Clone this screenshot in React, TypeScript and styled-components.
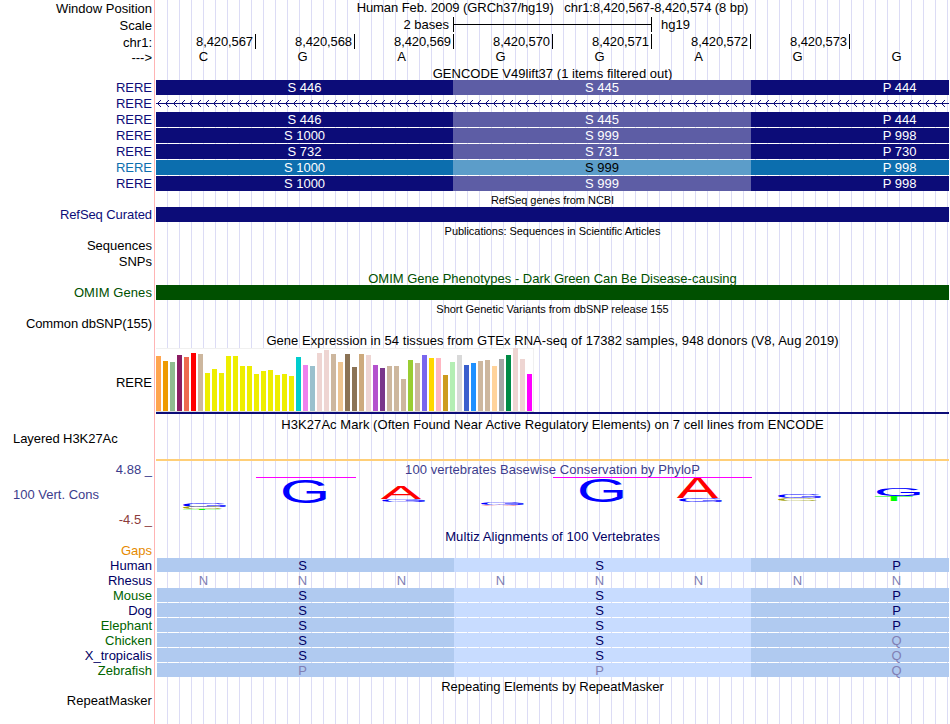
import type { FC, ReactElement, ReactNode } from "react";
import styled, { createGlobalStyle } from "styled-components";

const NAVY = "#0c0c78";
const TEAL = "#0c6eae";
const GREEN = "#005000";
const FADED = "#8080b4";

const GlobalStyle = createGlobalStyle`
  body {
    margin: 0;
    background: #fff;
  }
`;

const Page = styled.main`
  width: 950px;
  height: 724px;
  overflow: hidden;
  display: flex;
  flex-direction: column;
  font-family: "Liberation Sans", Arial, sans-serif;
  font-size: 13px;
  line-height: 15px;
  color: #000;
  white-space: pre;
  background-color: #fff;
  background-image:
    linear-gradient(#ffb4b4, #ffb4b4),
    repeating-linear-gradient(to right, #dcdcf5 0 1px, transparent 1px 12px);
  background-repeat: no-repeat;
  background-size: 1px 100%, 783px 100%;
  background-position: 154px 0, 167px 0;
`;

const Row = styled.div<{ $h: number }>`
  flex: none;
  display: flex;
  gap: 4px;
  height: ${({ $h }) => $h}px;
`;

const Label = styled.div<{ $top?: number; $color?: string; $left?: boolean; $ls?: number }>`
  box-sizing: border-box;
  width: 152px;
  flex: none;
  padding-top: ${({ $top = 0 }) => $top}px;
  padding-left: ${({ $left }) => $left ? 13 : 0}px;
  text-align: ${({ $left }) => $left ? "left" : "right"};
  color: ${({ $color = "#000" }) => $color};
  letter-spacing: ${({ $ls = 0 }) => $ls}px;
`;

// positioned so that a lane paints over the descenders of the title above it
const Lane = styled.div<{ $top?: number }>`
  position: relative;
  box-sizing: border-box;
  width: 793px;
  flex: none;
  overflow-x: clip;
  padding-top: ${({ $top = 0 }) => $top}px;
`;

const Title = styled.div<{ $color?: string; $ls?: number }>`
  text-align: center;
  color: ${({ $color = "#000" }) => $color};
  letter-spacing: ${({ $ls = 0 }) => $ls}px;
`;

const SmallTitle = styled(Title)`
  font-size: 11px;
`;

const ScaleLine = styled.div`
  display: flex;
  align-items: flex-start;
`;

const ScaleText = styled.span<{ $w: number; $pad?: number }>`
  box-sizing: border-box;
  width: ${({ $w }) => $w}px;
  padding-left: ${({ $pad = 0 }) => $pad}px;
  text-align: ${({ $pad }) => $pad ? "left" : "right"};
`;

const ScaleBar = styled.span`
  box-sizing: border-box;
  width: 199px;
  height: 15px;
  border: solid #000;
  border-width: 0 1px;
  margin-left: 4px;
  background: linear-gradient(#000, #000) 0 7px / 100% 1px no-repeat;
`;

const Ticks = styled.div`
  display: flex;
`;

const Tick = styled.span`
  box-sizing: border-box;
  width: 99px;
  height: 15px;
  padding-right: 2px;
  border-right: 1px solid #000;
  text-align: right;
  letter-spacing: -0.1px;

  &:first-child {
    width: 100px;
  }
`;

const Cells = styled.div`
  display: grid;
  grid-template-columns: repeat(8, 99px);
  margin-left: -2px;
  text-align: center;
`;

const Cell = styled.span<{ $color?: string }>`
  color: ${({ $color = "#000" }) => $color};
`;

const Exons = styled.div`
  display: grid;
  grid-template-columns: 297px 298px 297px;
  height: 15px;
`;

const Codon = styled.span<{ $bg: string; $color?: string }>`
  background: ${({ $bg }) => $bg};
  color: ${({ $color = "#fff" }) => $color};
  text-align: center;
`;

const SolidBar = styled.div<{ $color: string }>`
  height: 15px;
  background: ${({ $color }) => $color};
`;

const Aligned = styled.div<{ $filled: boolean }>`
  height: 14px;
  background: ${({ $filled }) => $filled
    ? "linear-gradient(to right, transparent 0.5px, #b0caf0 0.5px 298px, #c8dcff 298px 595px, #b0caf0 595px)"
    : "none"};
`;

const Expression = styled.div`
  height: 64px;
  border-bottom: 2px solid ${NAVY};
`;

const BarBox = styled.div`
  box-sizing: border-box;
  display: flex;
  align-items: flex-end;
  gap: 2px;
  width: 378px;
  height: 64px;
  background: #fff;
  border-bottom: 1px solid #dcdcdc;
  box-shadow: inset 0 1px #f0f0f0, inset -1px 0 #f0f0f0;
`;

const TissueBar = styled.i<{ $h: number; $color: string }>`
  width: 5px;
  height: ${({ $h }) => $h}px;
  background: ${({ $color }) => $color};
`;

const HistoneLine = styled.div`
  height: 2px;
  background: #ffcf78;
`;

const Drawing = styled.svg`
  display: block;
  overflow: visible;
`;

interface Transcript {
    codons?: string[];
    color: string;
    mid?: string;
    midText?: string;
}

const transcripts: Transcript[] = [
    { codons: ["S 446", "S 445", "P 444"], color: NAVY },
    { color: NAVY },
    { codons: ["S 446", "S 445", "P 444"], color: NAVY },
    { codons: ["S 1000", "S 999", "P 998"], color: NAVY },
    { codons: ["S 732", "S 731", "P 730"], color: NAVY },
    { codons: ["S 1000", "S 999", "P 998"], color: TEAL, mid: "#5c9dc9", midText: "#000" },
    { codons: ["S 1000", "S 999", "P 998"], color: NAVY }
];

// [height, color] for each GTEx tissue
const tissues: [number, string][] = [
    [55, "#ffa54f"], [50, "#ee9a00"], [49, "#8fbc8f"], [56, "#8b1c62"], [54, "#ee6a50"], [58, "#ff0000"],
    [57, "#cdb79e"], [38, "#eeee00"], [42, "#eeee00"], [38, "#eeee00"], [55, "#eeee00"], [55, "#eeee00"],
    [45, "#eeee00"], [45, "#eeee00"], [37, "#eeee00"], [40, "#eeee00"], [41, "#eeee00"], [36, "#eeee00"],
    [37, "#eeee00"], [35, "#eeee00"], [54, "#00cdcd"], [46, "#ee82ee"], [45, "#9ac0cd"], [58, "#eed5d2"],
    [61, "#eed5d2"], [57, "#cdb79e"], [49, "#eec591"], [57, "#8b7355"], [44, "#8b7355"], [57, "#cdaa7d"],
    [56, "#eed5d2"], [46, "#b452cd"], [43, "#7a378b"], [45, "#cdb79e"], [45, "#cdb79e"], [32, "#cdb79e"],
    [51, "#9acd32"], [48, "#cdb79e"], [56, "#7a67ee"], [53, "#ffd700"], [53, "#ffb6c1"], [36, "#cd9b1d"],
    [49, "#b4eeb4"], [56, "#d9d9d9"], [46, "#3a5fcd"], [48, "#1e90ff"], [50, "#cdb79e"], [51, "#cdb79e"],
    [45, "#ffd39b"], [52, "#a6a6a6"], [56, "#008b45"], [63, "#eed5d2"], [52, "#eed5d2"], [37, "#ff00ff"]
];

interface Species {
    name: string;
    color: string;
    bases: string;
    filled?: boolean;
}

const DARK = "#000064";
const LEAF = "#006400";

const species: Species[] = [
    { name: "Human", color: DARK, bases: " S  S  P" },
    { name: "Rhesus", color: DARK, bases: "NNNNNNNN", filled: false },
    { name: "Mouse", color: LEAF, bases: " S  S  P" },
    { name: "Dog", color: DARK, bases: " S  S  P" },
    { name: "Elephant", color: LEAF, bases: " S  S  P" },
    { name: "Chicken", color: LEAF, bases: " S  S  Q" },
    { name: "X_tropicalis", color: DARK, bases: " S  S  Q" },
    { name: "Zebrafish", color: LEAF, bases: " P  P  Q" }
];

// ink box of each capital, in em, baseline at 0
const ink: Record<string, { x: number; w: number; top: number; h: number }> = {
    A: { x: 0.004, w: 0.66, top: 0.688, h: 0.688 },
    C: { x: 0.05, w: 0.635, top: 0.698, h: 0.708 },
    G: { x: 0.05, w: 0.66, top: 0.698, h: 0.708 },
    T: { x: 0.022, w: 0.568, top: 0.688, h: 0.688 }
};

interface LogoLetter {
    char: string;
    x: number;
    y: number;
    w: number;
    h: number;
    color: string;
}

const BLUE = "#0000ff";

const logo: LogoLetter[] = [
    { char: "G", x: 27, y: 26, w: 43, h: 4, color: BLUE },
    { char: "C", x: 27, y: 30, w: 39, h: 2, color: "#a0a000" },
    { char: "T", x: 27, y: 32, w: 38, h: 1, color: "#00ff00" },
    { char: "G", x: 127, y: 2, w: 43, h: 24, color: BLUE },
    { char: "A", x: 225, y: 9, w: 40, h: 13, color: "#ff0000" },
    { char: "G", x: 226, y: 22, w: 43, h: 3, color: BLUE },
    { char: "G", x: 325, y: 26, w: 43, h: 2, color: BLUE },
    { char: "A", x: 325, y: 28, w: 38, h: 1, color: "#ff0000" },
    { char: "G", x: 424, y: 2, w: 43, h: 23, color: BLUE },
    { char: "A", x: 521, y: 1, w: 41, h: 20, color: "#ff0000" },
    { char: "G", x: 523, y: 21, w: 43, h: 4, color: BLUE },
    { char: "G", x: 622, y: 17, w: 43, h: 4, color: BLUE },
    { char: "C", x: 622, y: 21.5, w: 39, h: 2.5, color: "#a0a000" },
    { char: "G", x: 721, y: 11, w: 43, h: 8, color: BLUE },
    { char: "T", x: 719, y: 19, w: 38, h: 5, color: "#00ff00" }
];

interface TrackProps {
    h: number;
    label?: string;
    labelTop?: number;
    labelColor?: string;
    labelSpacing?: number;
    left?: boolean;
    top?: number;
    children?: ReactNode;
}

const Track: FC<TrackProps> = ({
    h, label, labelTop, labelColor, labelSpacing, left, top, children
}): ReactElement => (
    <Row $h={h}>
        <Label $top={labelTop} $color={labelColor} $left={left} $ls={labelSpacing}>{ label }</Label>
        <Lane $top={top}>{ children }</Lane>
    </Row>
);

const Intron: FC = (): ReactElement => (
    <Drawing width="793" height="15" shapeRendering="crispEdges">
        <defs>
            <pattern id="arrow" width="8" height="15" patternUnits="userSpaceOnUse">
                <path d="M1 7h1v1h-1zM2 6h1v1h-1zM3 5h1v1h-1zM4 4h1v1h-1zM2 8h1v1h-1zM3 9h1v1h-1zM4 10h1v1h-1z" fill={NAVY} />
            </pattern>
        </defs>
        <rect width="793" height="15" fill="url(#arrow)" />
        <rect y="7" width="793" height="1" fill={NAVY} />
    </Drawing>
);

const Conservation: FC = (): ReactElement => (
    <Drawing width="793" height="35">
        <path d="M100 .5h100M397 .5h199" stroke="#ff00ff" />
        { logo.map(({ char, x, y, w, h, color }) => {
            const box = ink[char];
            const sx = w / (box.w * 100);
            const sy = h / (box.h * 100);
            return (
                <text key={`${x}-${y}`}
                      fontSize="100"
                      fill={color}
                      transform={`translate(${x - box.x * 100 * sx} ${y + box.top * 100 * sy}) scale(${sx} ${sy})`}
                >
                    { char }
                </text>
            );
        }) }
    </Drawing>
);

const App: FC = (): ReactElement => (
    <>
        <GlobalStyle />
        <Page>
            <Track h={16} label="Window Position" labelTop={1}>
                <Title $ls={-0.08}>{ "Human Feb. 2009 (GRCh37/hg19)   chr1:8,420,567-8,420,574 (8 bp)" }</Title>
            </Track>
            <Track h={17} label="Scale" labelTop={2} top={1}>
                <ScaleLine>
                    <ScaleText $w={293}>2 bases</ScaleText>
                    <ScaleBar />
                    <ScaleText $w={60} $pad={9}>hg19</ScaleText>
                </ScaleLine>
            </Track>
            <Track h={16} label="chr1:" labelTop={2} top={1}>
                <Ticks>
                    { [567, 568, 569, 570, 571, 572, 573].map(n => <Tick key={n}>{ `8,420,${n}` }</Tick>) }
                </Ticks>
            </Track>
            <Track h={17} label="--->" labelTop={1}>
                <Cells>
                    { [..."CGAGGAGG"].map((base, i) => <Cell key={i}>{ base }</Cell>) }
                </Cells>
            </Track>

            <Track h={14}>
                <Title $ls={0.03}>GENCODE V49lift37 (1 items filtered out)</Title>
            </Track>
            { transcripts.map(({ codons, color, mid = "#5d5da5", midText }, i) => (
                <Track key={i} h={16} label="RERE" labelColor={color}>
                    { codons
                        ? (
                            <Exons>
                                <Codon $bg={color}>{ codons[0] }</Codon>
                                <Codon $bg={mid} $color={midText}>{ codons[1] }</Codon>
                                <Codon $bg={color}>{ codons[2] }</Codon>
                            </Exons>
                        )
                        : <Intron />
                    }
                </Track>
            )) }

            <Track h={15} top={1}>
                <SmallTitle $ls={-0.04}>RefSeq genes from NCBI</SmallTitle>
            </Track>
            <Track h={16} label="RefSeq Curated" labelColor={NAVY} labelSpacing={-0.08}>
                <SolidBar $color={NAVY} />
            </Track>

            <Track h={15} top={1}>
                <SmallTitle $ls={-0.04}>Publications: Sequences in Scientific Articles</SmallTitle>
            </Track>
            <Track h={16} label="Sequences" />
            <Track h={16} label="SNPs" />

            <Track h={15} top={1}>
                <Title $color={GREEN}>OMIM Gene Phenotypes - Dark Green Can Be Disease-causing</Title>
            </Track>
            <Track h={16} label="OMIM Genes" labelColor={GREEN} labelSpacing={0.08}>
                <SolidBar $color={GREEN} />
            </Track>

            <Track h={15} top={1}>
                <SmallTitle $ls={-0.02}>Short Genetic Variants from dbSNP release 155</SmallTitle>
            </Track>
            <Track h={16} label="Common dbSNP(155)" labelSpacing={-0.11} />

            <Track h={16} top={1}>
                <Title $ls={0.055}>Gene Expression in 54 tissues from GTEx RNA-seq of 17382 samples, 948 donors (V8, Aug 2019)</Title>
            </Track>
            <Track h={66} label="RERE" labelTop={27}>
                <Expression>
                    <BarBox>
                        { tissues.map(([h, color], i) => <TissueBar key={i} $h={h} $color={color} />) }
                    </BarBox>
                </Expression>
            </Track>

            <Track h={17} top={3}>
                <Title $ls={0.055}>H3K27Ac Mark (Often Found Near Active Regulatory Elements) on 7 cell lines from ENCODE</Title>
            </Track>
            <Track h={31} label="Layered H3K27Ac" labelSpacing={-0.06} left top={28}>
                <HistoneLine />
            </Track>

            <Track h={15} label="4.88 _" labelColor="#3c3c8c">
                <Title $color="#3c3c8c" $ls={0.06}>100 vertebrates Basewise Conservation by PhyloP</Title>
            </Track>
            <Track h={35} label="100 Vert. Cons" labelTop={10} labelColor="#3c3c8c" left>
                <Conservation />
            </Track>
            <Track h={17} label="-4.5 _" labelColor="#8c3c3c" />

            <Track h={14}>
                <Title $color={DARK} $ls={0.1}>Multiz Alignments of 100 Vertebrates</Title>
            </Track>
            <Track h={15} label="Gaps" labelColor="#e68a00" />
            { species.map(({ name, color, bases, filled = true }) => (
                <Track key={name} h={15} label={name} labelColor={color}>
                    <Aligned $filled={filled}>
                        <Cells>
                            { [...bases].map((base, i) => (
                                <Cell key={i} $color={"NQ".includes(base) || name === "Zebrafish" ? FADED : DARK}>
                                    { base }
                                </Cell>
                            )) }
                        </Cells>
                    </Aligned>
                </Track>
            )) }

            <Track h={15} top={1}>
                <Title>Repeating Elements by RepeatMasker</Title>
            </Track>
            <Track h={31} label="RepeatMasker" labelSpacing={0.06} />
        </Page>
    </>
);

export default App;
